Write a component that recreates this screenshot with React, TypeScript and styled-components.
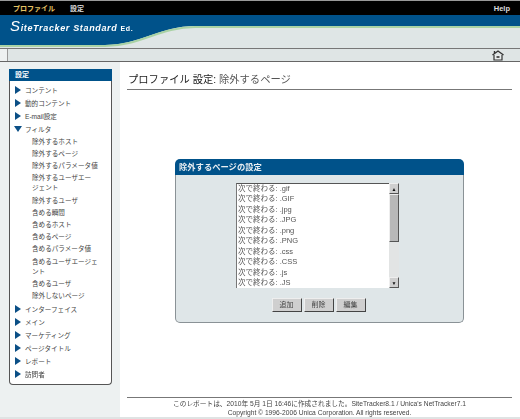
import styled, { createGlobalStyle } from 'styled-components';

const GlobalStyle = createGlobalStyle`
  html, body {
    margin: 0;
    height: 100%;
    overflow: hidden;
    background: #fff;
  }
  body {
    font-family: "Liberation Sans", "Noto Sans CJK JP", sans-serif;
    color: #444;
  }
`;

interface MenuEntry {
  label: string;
  open?: boolean;
  children?: string[];
}

const menu: MenuEntry[] = [
  { label: 'コンテント' },
  { label: '動的コンテント' },
  { label: 'E-mail設定' },
  {
    label: 'フィルタ',
    open: true,
    children: [
      '除外するホスト',
      '除外するページ',
      '除外するパラメータ値',
      '除外するユーザエー\nジェント',
      '除外するユーザ',
      '含める瞬間',
      '含めるホスト',
      '含めるページ',
      '含めるパラメータ値',
      '含めるユーザエージェ\nント',
      '含めるユーザ',
      '除外しないページ',
    ],
  },
  { label: 'インターフェイス' },
  { label: 'メイン' },
  { label: 'マーケティング' },
  { label: 'ページタイトル' },
  { label: 'レポート' },
  { label: '訪問者' },
];

const pages = ['.gif', '.GIF', '.jpg', '.JPG', '.png', '.PNG', '.css', '.CSS', '.js', '.JS'];

const Arrow = ({ open }: { open?: boolean }) => (
  <ArrowIcon viewBox="0 0 6 8" $open={open}>
    <path d="M0 0 L6 4 L0 8 Z" fill="#0b4f86" />
  </ArrowIcon>
);

const HomeIcon = () => (
  <svg width="12" height="11" viewBox="0 0 12 11">
    <path d="M0.5 5 L6 1 L11.5 5" fill="none" stroke="#333" strokeWidth="1.4" />
    <path d="M2 5 V10 H10 V5" fill="#e8ecec" stroke="#333" strokeWidth="1.2" />
    <path d="M2.5 1 V3" stroke="#333" strokeWidth="1.4" />
    <rect x="4.5" y="6" width="3" height="2" fill="#555" />
  </svg>
);

const BannerArt = () => (
  <BannerSvg viewBox="0 0 520 33" preserveAspectRatio="none">
    <path d="M0 0 H520 V11 H195 C160 11 140 30 105 30 H0 Z" fill="#00528a" />
    <path d="M0 31 H105 C140 31 160 12 195 12 H520" fill="none" stroke="#a9d2a4" strokeWidth="2" />
  </BannerSvg>
);

export default function App() {
  return (
    <Page>
      <GlobalStyle />
      <TopBar>
        <TopLinkActive>プロファイル</TopLinkActive>
        <TopLink>設定</TopLink>
        <HelpLink>Help</HelpLink>
      </TopBar>
      <Banner>
        <BannerArt />
        <Logo>
          <LogoInitial>S</LogoInitial>iteTracker Standard <LogoEdition>Ed.</LogoEdition>
        </Logo>
      </Banner>
      <Toolbar>
        <HomeIcon />
      </Toolbar>
      <Body>
        <Sidebar>
          <MenuPanel>
            <MenuHeader>設定</MenuHeader>
            <MenuList>
              {menu.map(entry => (
                <li key={entry.label}>
                  <MenuRow>
                    <Arrow open={entry.open} />
                    {entry.label}
                  </MenuRow>
                  {entry.children?.map(child => (
                    <SubRow key={child}>{child}</SubRow>
                  ))}
                </li>
              ))}
            </MenuList>
          </MenuPanel>
        </Sidebar>
        <Main>
          <Title>
            <strong>プロファイル 設定:</strong> 除外するページ
          </Title>
          <Dialog>
            <DialogHeader>除外するページの設定</DialogHeader>
            <DialogBody>
              <ListRow>
                <ListBox>
                  {pages.map(page => (
                    <ListItem key={page}>次で終わる: {page}</ListItem>
                  ))}
                </ListBox>
                <ScrollBar>
                  <ScrollButton>▲</ScrollButton>
                  <ScrollThumb />
                  <ScrollButton>▼</ScrollButton>
                </ScrollBar>
              </ListRow>
              <ButtonRow>
                <ActionButton>追加</ActionButton>
                <ActionButton>削除</ActionButton>
                <ActionButton>編集</ActionButton>
              </ButtonRow>
            </DialogBody>
          </Dialog>
          <Footer>
            <div>このレポートは、2010年 5月 1日 16:46に作成されました。SiteTracker8.1 / Unica's NetTracker7.1</div>
            <div>Copyright © 1996-2006 Unica Corporation. All rights reserved.</div>
          </Footer>
        </Main>
      </Body>
      <BottomStrip />
    </Page>
  );
}

const Page = styled.div`
  display: flex;
  flex-direction: column;
  width: 520px;
  height: 419px;
  overflow: hidden;
  filter: blur(0.3px);
`;

const TopBar = styled.div`
  display: flex;
  align-items: center;
  height: 14px;
  padding: 0 8px 0 13px;
  border-top: 1px solid #999;
  background: #000;
  font-size: 7px;
  font-weight: bold;
  color: #ddd;
`;

const TopLink = styled.span`
  margin-right: 15px;
`;

const TopLinkActive = styled(TopLink)`
  color: #e4c264;
`;

const HelpLink = styled.span`
  margin-left: auto;
  padding-right: 2px;
  font-size: 7.5px;
`;

const Banner = styled.div`
  position: relative;
  height: 33px;
  background: #dfe6e6;
`;

const BannerSvg = styled.svg`
  position: absolute;
  inset: 0;
  width: 100%;
  height: 100%;
`;

const Logo = styled.div`
  position: relative;
  padding: 3px 0 0 10px;
  color: #fff;
  font-size: 9px;
  font-weight: bold;
  font-style: italic;
  letter-spacing: 0.65px;
  line-height: 16px;
`;

const LogoInitial = styled.span`
  font-size: 15px;
  font-weight: normal;
`;

const LogoEdition = styled.span`
  font-size: 7px;
  font-style: normal;
`;

const Toolbar = styled.div`
  display: flex;
  justify-content: flex-end;
  align-items: center;
  height: 12px;
  padding: 0 16px 0 0;
  border-top: 1px solid #777;
  border-bottom: 1px solid #666;
  background: #dfe5e5;
  box-shadow: inset 7px 0 0 #eef1f1, inset 8px 0 0 #999;
`;

const Body = styled.div`
  display: flex;
  flex: 1;
  min-height: 0;
`;

const Sidebar = styled.div`
  width: 120px;
  flex-shrink: 0;
  padding: 7px 0 0 9px;
  box-sizing: border-box;
  background: #edf1f1;
`;

const MenuPanel = styled.div`
  width: 103px;
  height: 316px;
  box-sizing: border-box;
  border: 1px solid #555;
  border-top: none;
  border-radius: 0 0 4px 4px;
  background: #fff;
`;

const MenuHeader = styled.div`
  height: 12px;
  margin: 0 -1px;
  padding-left: 6px;
  background: #00528a;
  color: #fff;
  font-size: 7px;
  font-weight: bold;
  line-height: 12px;
`;

const MenuList = styled.ul`
  list-style: none;
  margin: 0;
  padding: 2.6px 0 0 5px;
`;

const MenuRow = styled.div`
  display: flex;
  align-items: center;
  gap: 4px;
  height: 13px;
  font-size: 6.6px;
  color: #444;
`;

const ArrowIcon = styled.svg<{ $open?: boolean }>`
  width: 6px;
  height: 8px;
  flex-shrink: 0;
  transform: ${p => (p.$open ? 'rotate(90deg)' : 'none')};
`;

const SubRow = styled.div`
  padding: 1px 0 1px 17px;
  font-size: 6.6px;
  line-height: 10.2px;
  color: #444;
  white-space: pre-line;
`;

const Main = styled.div`
  display: flex;
  flex: 1;
  flex-direction: column;
  min-width: 0;
  padding: 0 8px 0 7px;
`;

const Title = styled.h1`
  margin: 8px 0 0;
  height: 17px;
  padding: 2px 0 0 1px;
  border-bottom: 1px solid #777;
  color: #555;
  font-size: 10.3px;
  font-weight: normal;
  line-height: 15px;

  strong {
    font-weight: normal;
    color: #222;
  }
`;

const Dialog = styled.section`
  width: 289px;
  margin: 69px auto 0;
  border-radius: 5px;
`;

const DialogHeader = styled.div`
  height: 16px;
  padding-left: 4px;
  border-radius: 5px 5px 0 0;
  background: #00528a;
  color: #e8eef2;
  font-size: 8.3px;
  font-weight: bold;
  line-height: 16px;
`;

const DialogBody = styled.div`
  display: flex;
  flex-direction: column;
  align-items: center;
  height: 148px;
  box-sizing: border-box;
  padding-top: 8px;
  border: 1px solid #8a9296;
  border-top: none;
  border-radius: 0 0 5px 5px;
  background: #dfe6e8;
`;

const ListRow = styled.div`
  display: flex;
  height: 105px;
  margin-left: -4px;
`;

const ListBox = styled.div`
  width: 153px;
  box-sizing: border-box;
  overflow: hidden;
  border-top: 1px solid #555;
  border-left: 1px solid #777;
  background: #fff;
`;

const ListItem = styled.div`
  height: 10.45px;
  padding-left: 1px;
  color: #555;
  font-size: 7.5px;
  line-height: 10.45px;
  white-space: nowrap;
`;

const ScrollBar = styled.div`
  display: flex;
  flex-direction: column;
  width: 10px;
  background: #e2e4e4;
`;

const ScrollButton = styled.div`
  display: flex;
  align-items: center;
  justify-content: center;
  height: 11px;
  box-sizing: border-box;
  border: 1px solid;
  border-color: #eee #555 #555 #eee;
  background: #cfcfcf;
  color: #111;
  font-size: 5px;
`;

const ScrollThumb = styled.div`
  height: 48px;
  margin-bottom: auto;
  box-sizing: border-box;
  border: 1px solid;
  border-color: #eee #555 #555 #eee;
  background: #b8b8b8;
`;

const ButtonRow = styled.div`
  display: flex;
  gap: 2px;
  margin: 10px 0 0 -2px;
`;

const ActionButton = styled.button`
  width: 30px;
  height: 14px;
  padding: 0;
  box-sizing: border-box;
  border: 1px solid;
  border-color: #eee #444 #444 #eee;
  background: #cfcfcf;
  color: #444;
  font-family: inherit;
  font-size: 7px;
  line-height: 12px;
`;

const Footer = styled.footer`
  margin-top: auto;
  padding: 1px 0 0;
  border-top: 1px solid #777;
  color: #444;
  font-size: 6.7px;
  line-height: 9px;
  text-align: center;
`;

const BottomStrip = styled.div`
  height: 2px;
  background: #dfe3e3;
`;
